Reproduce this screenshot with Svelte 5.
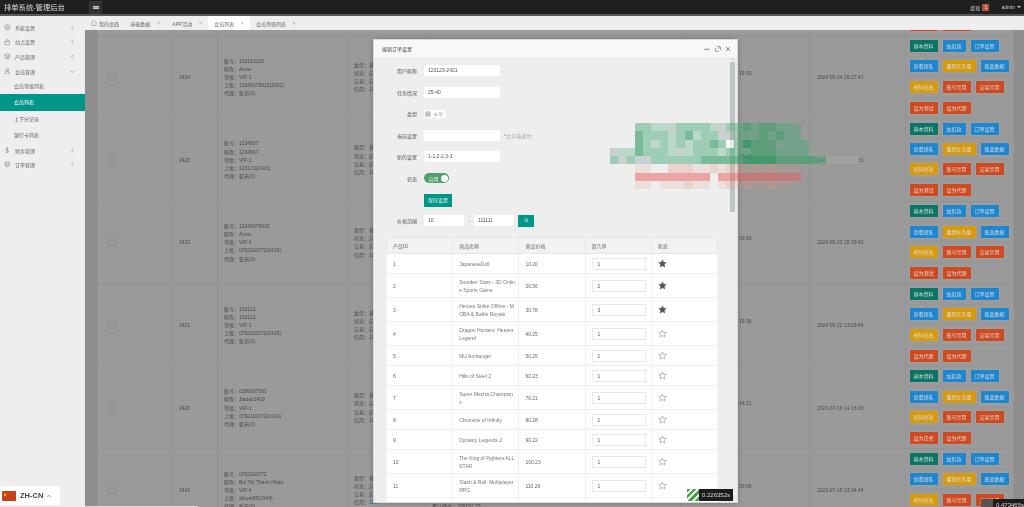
<script>
  const menu = [
    { label: "系统设置", icon: "gear" },
    { label: "站点设置", icon: "bag" },
    { label: "产品管理", icon: "box" },
    { label: "会员管理", icon: "user", open: true },
    { label: "财务管理", icon: "money" },
    { label: "订单管理", icon: "box" },
  ];
  const subMenu = ["会员等级列表", "会员列表", "上下分记录", "银行卡列表"];
  const tabs = [
    { label: "基础数据" },
    { label: "APP活动" },
    { label: "会员列表", active: true },
    { label: "会员等级列表" },
  ];

  const members = [
    { id: 2425, account: "123", nick: "123", level: "VIP-1", parent: "123123(2421)", login: "2024-05-25 10:12", times: "12", created: "2024-05-24 15:30:12", last: "设为测试" },
    { id: 2424, account: "123123123", nick: "Anna", level: "VIP-1", parent: "12345678910(2422)", login: "2024-05-24 15:53", times: "35", created: "2024-05-24 15:27:47", last: "设为测试" },
    { id: 2423, account: "1234567", nick: "1234567", level: "VIP-1", parent: "123123(2421)", login: "2024-05-24 15:40", times: "21", created: "2024-05-24 15:26:31", last: "设为测试" },
    { id: 2422, account: "12345678910", nick: "Anna", level: "VIP-1", parent: "0792110072(2419)", login: "2024-05-24 09:16", times: "18", created: "2024-05-22 15:33:42", last: "设为测试" },
    { id: 2421, account: "123122", nick: "123122", level: "VIP-1", parent: "0792110072(2419)", login: "2024-05-24 15:36", times: "56", created: "2024-05-22 13:03:46", last: "设为代理" },
    { id: 2420, account: "0389397360", nick: "Jiadao2419", level: "VIP-1", parent: "0792110072(2419)", login: "2023-07-19 14:21", times: "13", created: "2023-07-19 14:16:26", last: "设为正式" },
    { id: 2419, account: "0792110072", nick: "Bui Thi Thanh Nhan", level: "VIP-4", parent: "afuyet95(1944)", login: "2024-05-25 00:05", times: "95", created: "2023-07-19 13:34:44", last: "设为测试" },
  ];

  const products = [
    { id: 1, name: "JapaneseDoll", price: "10.20", order: 1, on: true },
    { id: 2, name: "Snooker Stars - 3D Online Sports Game", price: "20.56", order: 2, on: true },
    { id: 3, name: "Heroes Strike Offline - MOBA & Battle Royale", price: "30.78", order: 3, on: true },
    { id: 4, name: "Dragon Hunters: Heroes Legend", price: "40.25", order: 1 },
    { id: 5, name: "MU Archangel", price: "50.25", order: 1 },
    { id: 6, name: "Hills of Steel 2", price: "60.23", order: 1 },
    { id: 7, name: "Super Mecha Champions", price: "70.21", order: 1 },
    { id: 8, name: "Chronicle of Infinity", price: "80.28", order: 1 },
    { id: 9, name: "Dynasty Legends 2", price: "90.22", order: 1 },
    { id: 10, name: "The King of Fighters ALL STAR", price: "100.23", order: 1 },
    { id: 11, name: "Slash & Roll: Multiplayer RPG", price: "110.26", order: 1 },
    { id: 12, name: "", price: "", order: 1 },
  ];

  // the censored patch of the screenshot, one char per 8.3px cell
  const mosaic = [
    "...bbaagbbbbagbbcbccbba...",
    "...cbbbabcabbggbbbcbcbb...",
    "...cbabababbcbwbdcccabbb..",
    "gaacbbbagabbbabbbcccbbbbg.",
    "bgbggbbbbbbcccccddddcccccbssss",
    "...mm..pppmmpmppmpmpmmm...",
    "...rrrrrrrrr.rrrrrrrrrr...",
    "...mm.mmmpmm.mpmpmmpmm....",
  ];
  const cellColors = {
    a: "rgba(70,170,120,.3)",
    b: "rgba(70,170,120,.48)",
    c: "rgba(60,160,110,.66)",
    d: "rgba(50,150,100,.85)",
    g: "rgba(140,165,160,.4)",
    w: "rgba(255,255,255,.6)",
    m: "rgba(225,150,125,.16)",
    p: "rgba(225,150,125,.3)",
    r: "rgba(235,90,90,.5)",
    s: "#a0a0a0",
    ".": "transparent",
  };
</script>

{#snippet star(filled)}
  <svg class="star" viewBox="0 0 24 24">
    <path
      d="M12 2.500l2.900 6.300 6.900.8-5.100 4.700 1.400 6.800-6.100-3.400-6.100 3.400 1.400-6.800-5.100-4.700 6.900-.8z"
      fill={filled ? "#555" : "none"}
      stroke={filled ? "#555" : "#888"}
      stroke-width="1.500"
    />
  </svg>
{/snippet}

{#snippet menuIcon(name)}
  <svg class="menu-icon" viewBox="0 0 12 12" fill="none" stroke="#777" stroke-width="1">
    {#if name === "gear"}
      <circle cx="6" cy="6" r="5" /><circle cx="6" cy="6" r="2" />
    {:else if name === "bag"}
      <path d="M2 4.500h8l.6 6H1.400zM4 4.500V3a2 2 0 0 1 4 0v1.500" />
    {:else if name === "box"}
      <path d="M6 1l5 2.500L6 6 1 3.500zM1 6l5 2.500L11 6M1 8.500L6 11l5-2.500" />
    {:else if name === "user"}
      <circle cx="6" cy="3.500" r="2.500" /><path d="M1.500 11c0-3 2-4.500 4.500-4.500s4.500 1.500 4.500 4.500z" />
    {:else}
      <path d="M8.500 3.500C8 2.500 7 2 6 2 4.500 2 3.500 2.800 3.500 4S4.500 5.500 6 6s2.500 1 2.500 2S7.500 10 6 10c-1 0-2-.5-2.500-1.500M6 .5v11" />
    {/if}
  </svg>
{/snippet}

<div class="app">
  <header class="topbar">
    <div class="brand">排单系统-管理后台</div>
    <button class="burger" aria-label="菜单"><span></span></button>
    <div class="top-right">
      <span>提现</span>
      <span class="badge">1</span>
      <span class="user">admin</span>
      <span class="caret"></span>
    </div>
  </header>

  <div class="body">
    <aside class="sidebar">
      {#each menu as item}
        <div class="menu-row">
          {@render menuIcon(item.icon)}
          <span class="menu-label">{item.label}</span>
          <svg class="chevron" viewBox="0 0 8 8" fill="none" stroke="#888" stroke-width="1">
            <path d={item.open ? "M1 2.500l3 3 3-3" : "M5.500 1l-3 3 3 3"} />
          </svg>
        </div>
        {#if item.open}
          {#each subMenu as sub}
            <div class="sub-row" class:active={sub === "会员列表"}>{sub}</div>
          {/each}
        {/if}
      {/each}
    </aside>

    <main class="main">
      <nav class="tabs">
        <div class="tab home">
          <svg viewBox="0 0 10 10" fill="none" stroke="#777" stroke-width=".8"><path d="M5 1L1.500 3.500V9h7V3.500z" /></svg>
          我的桌面
        </div>
        {#each tabs as tab}
          <div class="tab" class:active={tab.active}>{tab.label}<span class="tab-close">×</span></div>
        {/each}
      </nav>

      <section class="content">
        <table class="members">
          <colgroup>
            <col style="width:75px" /><col style="width:45px" /><col style="width:130px" /><col style="width:78px" />
            <col style="width:255px" /><col style="width:130px" /><col style="width:95px" /><col style="width:108px" />
          </colgroup>
          <tbody>
            {#each members as m}
              <tr>
                <td><span class="check"></span></td>
                <td>{m.id}</td>
                <td class="lines">
                  账号：{m.account}<br />昵称：{m.nick}<br />等级：{m.level}<br />上级：{m.parent}<br />代理：暂无(0)
                </td>
                <td class="lines">
                  类型：普通<br />状态：启用<br />交易：启用<br />信用：<span class="credit">100</span>
                </td>
                <td class="lines">
                  余额：1052.30<br />冻结：0.00<br />总充值：8052.00<br />总提现：1200.00<br />累计佣金：206152.73
                </td>
                <td class="lines">最后登录：{m.login}<br />登录次数：{m.times}</td>
                <td>{m.created}</td>
                <td class="actions">
                  <div class="btn-row">
                    <span class="btn teal">基本资料</span><span class="btn blue">加扣款</span><span class="btn blue">订单设置</span>
                  </div>
                  <div class="btn-row">
                    <span class="btn blue">查看团队</span><span class="btn orange">重置任务量</span><span class="btn blue">账变数据</span>
                  </div>
                  <div class="btn-row">
                    <span class="btn orange">密码修改</span><span class="btn red">账号禁用</span><span class="btn red">交易禁用</span>
                  </div>
                  <div class="btn-row">
                    <span class="btn red">{m.last}</span><span class="btn red">设为代理</span>
                  </div>
                </td>
              </tr>
            {/each}
          </tbody>
        </table>
        <div class="page-scroll"></div>
      </section>
    </main>
  </div>

  <div class="modal">
    <div class="modal-head">
      <span>编辑订单设置</span>
      <div class="modal-tools">
        <svg viewBox="0 0 10 10" stroke="#555" fill="none" stroke-width="1.300"><path d="M1 5.500h8" /></svg>
        <svg viewBox="0 0 10 10" stroke="#555" fill="none" stroke-width=".9"><path d="M1 3v6h6M3 1h6v6M5.500 4.500L8 2" /></svg>
        <svg viewBox="0 0 10 10" stroke="#555" fill="none" stroke-width="1.100"><path d="M1.500 1.500l7 7M8.500 1.500l-7 7" /></svg>
      </div>
    </div>
    <div class="modal-body">
      <div class="modal-scroll">
        <div class="field"><label>用户昵称</label><div class="input wide">123123-2421</div></div>
        <div class="field"><label>任务情况</label><div class="input wide">25-40</div></div>
        <div class="field"><label>类型</label><div class="toggle"><i></i>卡单</div></div>
        <div class="field">
          <label>当前设置</label><div class="input wide"></div><span class="hint"><b>*</b>文字描述为：</span>
        </div>
        <div class="field"><label>新的设置</label><div class="input wide">1-1,2-2,3-3</div></div>
        <div class="field"><label>状态</label><div class="switch">启用<i></i></div></div>
        <div class="field save"><label></label><span class="save-btn">保存设置</span></div>
        <div class="field price">
          <label>价格范围</label>
          <div class="input short">10</div>
          <span class="dash">-</span>
          <div class="input short">111111</div>
          <span class="search-btn">
            <svg viewBox="0 0 10 10" fill="none" stroke="#fff" stroke-width="1.200"><circle cx="4.300" cy="4.300" r="3" /><path d="M6.500 6.500L9 9" /></svg>
          </span>
        </div>

        <table class="products">
          <thead>
            <tr><th>产品ID</th><th>商品名称</th><th>商品价格</th><th>第几单</th><th>状态</th></tr>
          </thead>
          <tbody>
            {#each products as p}
              <tr>
                <td>{p.id}</td>
                <td class="name">{p.name}</td>
                <td>{p.price}</td>
                <td><div class="order">{p.order}</div></td>
                <td>{@render star(p.on)}</td>
              </tr>
            {/each}
          </tbody>
        </table>
      </div>
      <div class="scrollbar">
        <span class="arrow up"></span>
        <span class="thumb"></span>
        <span class="arrow down"></span>
      </div>
    </div>
  </div>

  <div class="mosaic" aria-hidden="true">
    {#each mosaic as row}
      <div class="mosaic-row">
        {#each row.split("") as c}
          <span style="background:{cellColors[c]}"></span>
        {/each}
      </div>
    {/each}
  </div>

  <div class="timer first">
    <span class="timer-logo"></span><span class="timer-text">0.226352s</span>
  </div>
  <div class="timer second">
    <span class="timer-logo dim"></span><span class="timer-text">0.473465s</span>
  </div>

  <div class="lang">
    <svg class="flag" viewBox="0 0 14 10"><rect width="14" height="10" rx="1" fill="#c8401c" /><path d="M3 1.500l.6 1.500 1.500.1-1.200 1 .4 1.500L3 4.800l-1.300.8.400-1.500-1.200-1 1.500-.1z" fill="#e8b020" /></svg>
    <span>ZH-CN</span>
    <svg class="lang-up" viewBox="0 0 8 8" fill="none" stroke="#777" stroke-width="1"><path d="M1.500 5.500L4 3l2.500 2.500" /></svg>
  </div>
</div>

<style>
  :global(body) {
    margin: 0;
    overflow: hidden;
  }

  .app {
    position: relative;
    width: 1024px;
    height: 507px;
    overflow: hidden;
    display: flex;
    flex-direction: column;
    font-family: "Liberation Sans", "Noto Sans CJK SC", sans-serif;
    font-size: 5px;
    color: #666;
    background: #eee;
    filter: blur(0.5px);
  }

  .topbar {
    flex: none;
    height: 14px;
    border-bottom: 2px solid #585858;
    background: #202020;
    display: flex;
    align-items: center;
    color: #ccc;
  }

  .brand {
    width: 89px;
    padding-left: 4px;
    box-sizing: border-box;
    font-size: 7.300px;
    color: #ddd;
  }

  .burger {
    width: 13px;
    height: 13px;
    padding: 0;
    border: 0;
    background: #333;
    display: flex;
    align-items: center;
    justify-content: center;
  }

  .burger span {
    width: 6px;
    height: 3px;
    border-top: 1px solid #ccc;
    border-bottom: 1px solid #ccc;
    background: #999;
    box-sizing: border-box;
  }

  .top-right {
    margin-left: auto;
    display: flex;
    align-items: center;
    padding-right: 3px;
  }

  .badge {
    width: 7px;
    height: 7px;
    margin: 0 12px 0 2px;
    background: #b8533a;
    color: #eee;
    text-align: center;
    line-height: 7px;
  }

  .caret {
    margin-left: 2px;
    border: 2px solid transparent;
    border-top-color: #ccc;
    border-bottom-width: 0;
  }

  .body {
    flex: 1;
    min-height: 0;
    display: flex;
  }

  .sidebar {
    flex: none;
    width: 85px;
    padding-top: 4px;
    box-sizing: border-box;
    background: #eee;
  }

  .menu-row {
    height: 14.600px;
    display: flex;
    align-items: center;
    padding: 0 10px 0 4px;
  }

  .menu-icon {
    width: 6.500px;
    height: 6.500px;
    margin-right: 4.500px;
  }

  .menu-label {
    flex: 1;
  }

  .chevron {
    width: 5px;
    height: 5px;
  }

  .sub-row {
    height: 16.100px;
    line-height: 16.100px;
    padding-left: 14px;
  }

  .sub-row.active {
    background: #009688;
    color: #fff;
  }

  .main {
    flex: 1;
    min-width: 0;
    display: flex;
    flex-direction: column;
  }

  .tabs {
    flex: none;
    height: 14px;
    display: flex;
    background: #eee;
  }

  .tab {
    display: flex;
    align-items: center;
    padding: 0 6px;
    color: #666;
  }

  .tab.home {
    padding-right: 5.500px;
  }

  .tab.home svg {
    width: 6px;
    height: 6px;
    margin-right: 2px;
  }

  .tab.active {
    background: #fff;
  }

  .tab-close {
    margin-left: 6.300px;
    font-size: 6px;
    color: #aaa;
  }

  .content {
    position: relative;
    flex: 1;
    min-height: 0;
    overflow: hidden;
    padding: 0 11px 0 12px;
    background: #8e8e8e;
  }

  .members {
    width: 916px;
    margin-top: -77.200px;
    table-layout: fixed;
    border-collapse: collapse;
    background: #9a9a9a;
    color: #4a4a4a;
  }

  .members td {
    height: 82.600px;
    padding: 0 6px;
    box-sizing: border-box;
    border: 1px solid #949494;
    overflow: hidden;
    white-space: nowrap;
  }

  .members td.lines {
    line-height: 8.150px;
  }

  .credit {
    color: #2c5a80;
  }

  .check {
    display: block;
    width: 6px;
    height: 6px;
    margin-left: 4px;
    border: 1px solid #8e8e8e;
    border-radius: 1px;
  }

  .members td.actions {
    padding: 0 3px;
    vertical-align: top;
  }

  .btn-row {
    height: 20.400px;
    display: flex;
    align-items: center;
    gap: 5px;
    padding-left: 0.500px;
    border-bottom: 1px solid #969696;
    box-sizing: border-box;
  }

  .btn-row:last-child {
    border-bottom: 0;
  }

  .btn {
    height: 12px;
    line-height: 12px;
    padding: 0 4px;
    color: #ddd;
    box-shadow: 0 0 0 0.5px rgba(255, 255, 255, 0.12);
  }

  .teal {
    background: #0a7566;
  }

  .blue {
    background: #1e85cf;
  }

  .orange {
    background: #d59a0d;
  }

  .red {
    background: #cf4a20;
  }

  .page-scroll {
    position: absolute;
    left: 0;
    bottom: 0;
    width: 113px;
    height: 1px;
    background: #ddd;
  }

  .modal {
    position: absolute;
    left: 374px;
    top: 40px;
    width: 363px;
    height: 462px;
    display: flex;
    flex-direction: column;
    background: #eee;
    box-shadow: 0 0 6px rgba(0, 0, 0, 0.35);
    outline: 1px solid rgba(255, 255, 255, 0.7);
  }

  .modal-head {
    flex: none;
    height: 17px;
    display: flex;
    align-items: center;
    padding: 0 6px 0 8px;
    background: #f8f8f8;
    color: #444;
  }

  .modal-tools {
    margin-left: auto;
    display: flex;
    gap: 4.500px;
  }

  .modal-tools svg {
    width: 6px;
    height: 6px;
  }

  .modal-body {
    flex: 1;
    min-height: 0;
    display: flex;
  }

  .modal-scroll {
    flex: 1;
    min-width: 0;
    overflow: hidden;
    padding: 8px 0 0 12px;
  }

  .field {
    height: 11px;
    display: flex;
    align-items: center;
    margin-bottom: 10.500px;
  }

  .field label {
    flex: none;
    width: 31px;
    margin-right: 7px;
    text-align: right;
    color: #555;
  }

  .input {
    height: 11px;
    line-height: 11px;
    padding: 0 4px;
    box-sizing: border-box;
    background: #fff;
    color: #555;
  }

  .input.wide {
    width: 76px;
  }

  .input.short {
    width: 40px;
  }

  .hint {
    margin-left: 4px;
    color: #aaa;
  }

  .hint b {
    font-weight: normal;
    color: #e06a5a;
  }

  .toggle {
    width: 22px;
    height: 8px;
    display: flex;
    align-items: center;
    gap: 2px;
    box-sizing: border-box;
    padding-left: 1px;
    border-radius: 4px;
    background: #fff;
    color: #aaa;
  }

  .toggle i {
    width: 6px;
    height: 6px;
    border-radius: 50%;
    background: #c2c2c2;
  }

  .switch {
    width: 25px;
    height: 10px;
    display: flex;
    align-items: center;
    justify-content: space-between;
    box-sizing: border-box;
    padding: 0 1.500px 0 4.500px;
    border-radius: 5px;
    background: #4fa06c;
    color: #e6f2ea;
  }

  .switch i {
    width: 7px;
    height: 7px;
    border-radius: 50%;
    background: #fff;
  }

  .save {
    height: 13px;
    margin-bottom: 8px;
  }

  .save-btn {
    width: 28px;
    height: 13px;
    line-height: 13px;
    text-align: center;
    background: #009688;
    color: #e8f5f3;
  }

  .price {
    margin-bottom: 0;
  }

  .dash {
    width: 10px;
    text-align: center;
  }

  .search-btn {
    width: 16px;
    height: 12px;
    margin-left: 4px;
    display: flex;
    align-items: center;
    justify-content: center;
    background: #009688;
  }

  .search-btn svg {
    width: 5px;
    height: 5px;
  }

  .products {
    width: 332px;
    margin-top: 11px;
    table-layout: fixed;
    border-collapse: collapse;
    background: #fff;
    color: #666;
  }

  .products th {
    height: 15px;
    padding: 0 6px;
    font-weight: normal;
    text-align: left;
    background: #f2f2f2;
    border: 1px solid #e6e6e6;
  }

  .products td {
    padding: 3.500px 6px;
    line-height: 8px;
    border: 1px solid #f0f0f0;
    background: #fff;
  }

  .products td.name {
    padding-right: 3.500px;
    word-break: break-all;
    color: #777;
  }

  .order {
    width: 54px;
    height: 12px;
    line-height: 10px;
    padding-left: 5px;
    box-sizing: border-box;
    border: 1px solid #e8e8e8;
    color: #555;
  }

  .star {
    display: block;
    width: 9px;
    height: 9px;
  }

  .scrollbar {
    flex: none;
    width: 7px;
    margin-right: 1px;
    display: flex;
    flex-direction: column;
    align-items: center;
    padding-top: 2px;
  }

  .arrow {
    border: 1.500px solid transparent;
  }

  .arrow.up {
    border-bottom-color: #888;
    border-top-width: 0;
  }

  .arrow.down {
    margin-top: auto;
    margin-bottom: 4px;
    border-top-color: #555;
    border-bottom-width: 0;
  }

  .thumb {
    width: 5px;
    height: 150px;
    margin-top: 2px;
    background: #bcc6c4;
  }

  .mosaic {
    position: absolute;
    left: 610px;
    top: 123px;
  }

  .mosaic-row {
    display: flex;
    height: 8.300px;
  }

  .mosaic-row span {
    width: 8.300px;
  }

  .timer {
    position: absolute;
    display: flex;
    height: 12px;
    line-height: 12px;
    font-size: 6px;
  }

  .timer.first {
    left: 687px;
    top: 489px;
  }

  .timer.second {
    left: 981px;
    top: 499px;
  }

  .timer-logo {
    width: 12px;
    background: repeating-linear-gradient(135deg, #4f9a4f 0 2.500px, #e4efe4 2.500px 4.500px);
  }

  .timer-logo.dim {
    background: #555;
  }

  .timer-text {
    padding: 0 3px;
    background: #1c1c1c;
    color: #ddd;
  }

  .lang {
    position: absolute;
    left: 0;
    top: 486px;
    width: 60px;
    height: 19px;
    display: flex;
    align-items: center;
    background: #fff;
    font-size: 7.500px;
    font-weight: bold;
    color: #444;
  }

  .flag {
    width: 14px;
    height: 10px;
    margin: 0 4px 0 2px;
  }

  .lang-up {
    width: 6px;
    height: 6px;
    margin-left: 3px;
  }
</style>
